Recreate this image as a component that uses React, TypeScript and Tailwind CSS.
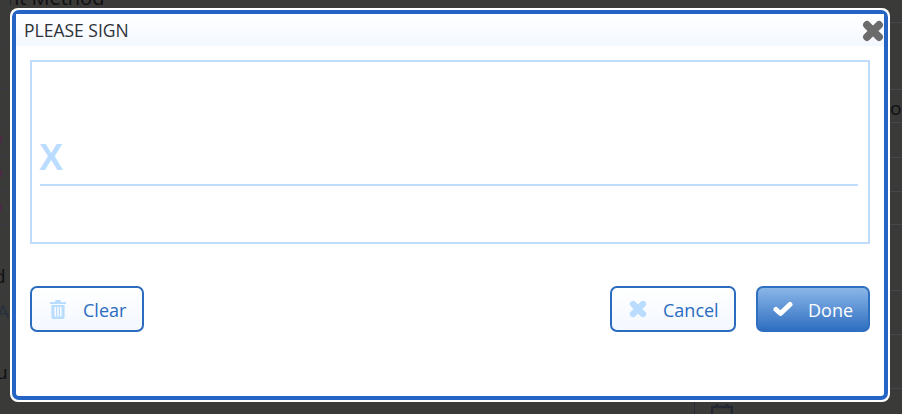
import React from "react";

const font = { fontFamily: '"Open Sans", "Noto Sans", sans-serif' };

const CloseIcon = ({ className }: { className: string }) => (
  <svg viewBox="0 0 20 20" className={className}>
    <path d="M4.5 4.5 L15.5 15.5 M15.5 4.5 L4.5 15.5" fill="none" stroke="currentColor" strokeWidth="7" strokeLinecap="round" strokeLinejoin="round" />
  </svg>
);

const TrashIcon = () => (
  <svg viewBox="0 0 18 20" className="h-[20px] w-[18px] text-[#b9dcff]">
    <path d="M6 3 L6.6 1 H11.4 L12 3 H17 V5 H1 V3 Z" fill="currentColor" />
    <path fillRule="evenodd" d="M2.4 6 H15.6 V18 Q15.6 20 13.6 20 H4.4 Q2.4 20 2.4 18 Z M5.4 8 V17.5 H7 V8 Z M8.2 8 V17.5 H9.8 V8 Z M11 8 V17.5 H12.6 V8 Z" fill="currentColor" />
  </svg>
);

const CheckIcon = () => (
  <svg viewBox="0 0 20 16" className="h-[16px] w-[20px] text-white">
    <path d="M3 8.5 L7.5 12.5 L17 3.5" fill="none" stroke="currentColor" strokeWidth="5" strokeLinejoin="round" strokeLinecap="round" />
  </svg>
);

// page behind the modal, only a sliver of it shows at the edges
const LeftEdge = () => (
  <div className="flex w-[10px] flex-col overflow-hidden text-[19px] leading-[24px] text-[#0f0f12]">
    <div className="h-[46px] shrink-0 border-b border-[#34383f]" />
    <div className="h-[43px] shrink-0 border-b border-[#34383f]" />
    <div className="h-[34px] shrink-0 border-b border-[#34383f]" />
    <div className="flex h-[34px] shrink-0 items-center border-b border-[#34383f]">
      <div className="h-[7px] w-[2px] bg-[#4a2a44]" />
    </div>
    <div className="flex h-[34px] shrink-0 items-center border-b border-[#34383f]">
      <div className="h-[7px] w-[2px] bg-[#4a2a44]" />
    </div>
    <div className="flex h-[34px] shrink-0 items-center border-b border-[#34383f]">
      <div className="h-[7px] w-[2px] bg-[#4a2a44]" />
    </div>
    <div className="flex h-[66px] shrink-0 items-end border-b border-[#34383f] pb-[2px]">
      <span className="ml-[-6px]">d</span>
    </div>
    <div className="flex h-[35px] shrink-0 items-center border-b border-[#34383f] pt-[6px]">
      <span className="ml-[-3px] text-[#27303f]">A</span>
    </div>
    <div className="h-[88px] shrink-0 pt-[34px]">
      <span className="ml-[-4px] block">u</span>
    </div>
  </div>
);

const RightEdge = () => (
  <div className="flex w-[12px] flex-col overflow-hidden text-[19px] leading-[24px] text-[#0f0f12]">
    <div className="h-[23px] shrink-0 border-b border-[#45474b]" />
    <div className="h-[67px] shrink-0 border-b border-[#45474b]" />
    <div className="flex h-[33px] shrink-0 items-center whitespace-nowrap border-b border-[#45474b] pt-[3px]">
      <span>ou</span>
    </div>
    <div className="h-[35px] shrink-0 border-b border-[#45474b]" />
    <div className="h-[34px] shrink-0 border-b border-[#45474b]" />
    <div className="h-[33px] shrink-0 border-b border-[#45474b]" />
    <div className="h-[66px] shrink-0 border-b border-[#45474b]" />
    <div className="h-[44px] shrink-0 border-b border-[#45474b]" />
    <div className="h-[54px] shrink-0 border-b border-[#45474b]" />
  </div>
);

export default function App() {
  return (
    <div className="flex h-[414px] w-[902px] overflow-hidden bg-[#3a3a38]" style={font}>
      <LeftEdge />
      <div className="flex w-[880px] flex-col">
        <div className="h-[8px] shrink-0 overflow-hidden text-[20px] leading-[24px] text-[#0f0f12]">
          <div className="mt-[-14px] ml-[-66px] whitespace-nowrap">Payment Method</div>
        </div>

        <div className="h-[394px] shrink-0 rounded-[8px] bg-white p-[2px]">
          <div className="relative h-full rounded-[7px] border-4 border-[#2563c4] bg-white">
            <div className="flex h-[32px] items-center bg-gradient-to-b from-white to-[#f3f8ff] pl-[8px] text-[17.5px] text-[#2e3238]">
              PLEASE SIGN
            </div>
            <CloseIcon className="absolute right-0 top-[6px] h-[22px] w-[22px] text-[#6b6b6b]" />

            <div className="mx-[14px] mt-[14px] flex h-[184px] flex-col border-2 border-[#c0dcfc] pl-[8px] pr-[10px]">
              <div className="flex h-[124px] items-end border-b-2 border-[#c0dcfc] pb-[8px]">
                <span className="ml-[-1px] text-[36px] font-bold leading-[36px] text-[#b9dcff]" style={{ fontFamily: '"Liberation Sans", sans-serif' }}>
                  X
                </span>
              </div>
            </div>

            <div className="mx-[14px] mt-[42px] flex items-center text-[18px] text-[#2b6cbf]">
              <button className="flex h-[46px] w-[114px] items-center gap-[16px] rounded-[7px] border-2 border-[#2b6cbf] bg-gradient-to-b from-white to-[#f3f8ff] pl-[17px]">
                <TrashIcon />
                <span className="pt-[2px]">Clear</span>
              </button>
              <button className="ml-auto flex h-[46px] w-[126px] items-center gap-[16px] rounded-[7px] border-2 border-[#2b6cbf] bg-gradient-to-b from-white to-[#f3f8ff] pl-[17px]">
                <CloseIcon className="h-[18px] w-[18px] text-[#b9dcff]" />
                <span className="pt-[2px]">Cancel</span>
              </button>
              <button className="ml-[20px] flex h-[46px] w-[114px] items-center gap-[15px] rounded-[7px] border-2 border-[#2f6fc0] bg-gradient-to-b from-[#8ab6e8] to-[#2f6fc0] pl-[15px] text-white">
                <CheckIcon />
                <span className="pt-[2px]">Done</span>
              </button>
            </div>
          </div>
        </div>

        <div className="flex h-[12px] shrink-0 items-end gap-[16px] overflow-hidden pl-[684px] text-[#232833]">
          <div className="h-[12px] w-px bg-[#262a33]" />
          <svg viewBox="0 0 22 10" className="h-[10px] w-[22px]">
            <path d="M1 10 V3 H21 V10 M6 3 V0 M16 3 V0" fill="none" stroke="currentColor" strokeWidth="2.5" />
          </svg>
        </div>
      </div>
      <RightEdge />
    </div>
  );
}
